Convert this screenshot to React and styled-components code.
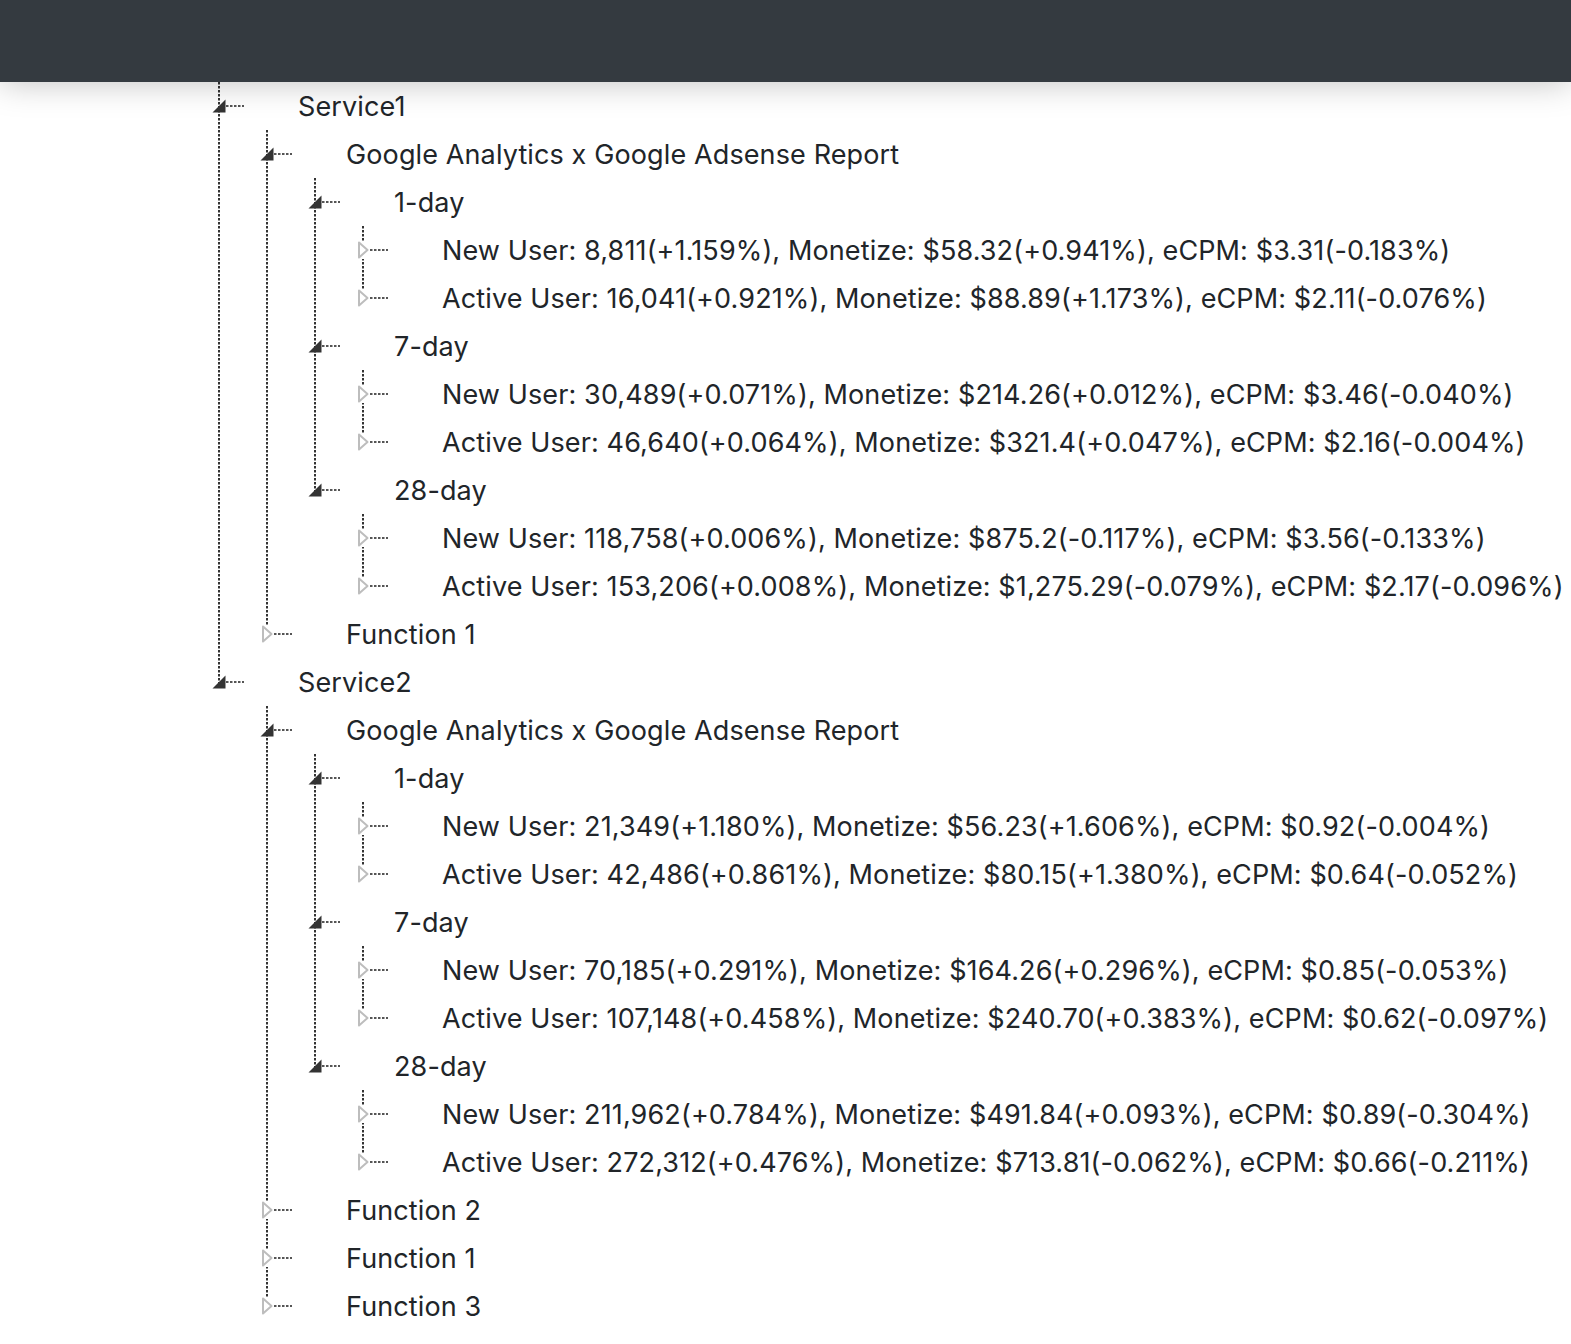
import React from 'react';
import styled, { createGlobalStyle } from 'styled-components';

const GlobalStyle = createGlobalStyle`
  html, body {
    margin: 0;
    padding: 0;
    background: #fff;
  }
  body {
    font-family: Inter, "Noto Sans", "Liberation Sans", sans-serif;
    color: #212529;
  }
`;

const Page = styled.div`
  width: 100%;
  min-height: 1344px;
  overflow: hidden;
`;

const TopBar = styled.header`
  position: relative;
  z-index: 2;
  height: 82px;
  background: #343a40;
  box-shadow: 0 0 34px rgba(0, 0, 0, 0.26);
`;

const Content = styled.main`
  padding-left: 218px;
`;

const Tree = styled.ul`
  list-style: none;
  margin: 0;
  padding: 0 0 0 ${p => (p.$root ? 0 : 48)}px;
`;

// dotted guide line, 4px period
const dots = 'linear-gradient(#333 2px, #9a9a9a 2px 3px, transparent 3px) 0 0 / 2px 4px repeat-y';

const Node = styled.li`
  margin: 0;
  background: ${dots};

  &:last-child {
    background: linear-gradient(#fff, #fff) 0 25px / 2px 100% no-repeat, ${dots};
  }
`;

const Row = styled.div`
  display: flex;
  align-items: center;
  height: 48px;
  margin-left: -6px;
`;

const Toggle = styled.span`
  display: flex;
  align-items: center;
  justify-content: ${p => (p.$open ? 'flex-start' : 'center')};
  width: 14px;
  height: 18px;
  background: ${p => (p.$open ? 'transparent' : '#fff')};
`;

const Connector = styled.span`
  width: 18px;
  height: 2px;
  background: linear-gradient(to right, #555 2px, #aaa 2px 3px, transparent 3px) 0 0 / 4px 2px repeat-x;
`;

const Label = styled.span`
  margin-left: 54px;
  padding-top: 2px;
  font-size: 27px;
  line-height: 46px;
  white-space: nowrap;
  letter-spacing: 0.12px;
`;

const OpenIcon = () => (
  <svg width="14" height="14" viewBox="0 0 14 14">
    <path d="M0.5 13.5 L13.5 0.5 L13.5 13.5 Z" fill="#333" />
  </svg>
);

const LeafIcon = () => (
  <svg width="12" height="18" viewBox="0 0 12 18">
    <path d="M2 1.5 L10.5 9 L2 16.5 Z" fill="#fff" stroke="#bdbdbd" strokeWidth="2" strokeLinejoin="round" />
  </svg>
);

const stats = (rows) => rows.map(t => ({ label: t }));

const data = [
  {
    label: 'Service1',
    children: [
      {
        label: 'Google Analytics x Google Adsense Report',
        children: [
          {
            label: '1-day',
            children: stats([
              'New User: 8,811(+1.159%), Monetize: $58.32(+0.941%), eCPM: $3.31(-0.183%)',
              'Active User: 16,041(+0.921%), Monetize: $88.89(+1.173%), eCPM: $2.11(-0.076%)',
            ]),
          },
          {
            label: '7-day',
            children: stats([
              'New User: 30,489(+0.071%), Monetize: $214.26(+0.012%), eCPM: $3.46(-0.040%)',
              'Active User: 46,640(+0.064%), Monetize: $321.4(+0.047%), eCPM: $2.16(-0.004%)',
            ]),
          },
          {
            label: '28-day',
            children: stats([
              'New User: 118,758(+0.006%), Monetize: $875.2(-0.117%), eCPM: $3.56(-0.133%)',
              'Active User: 153,206(+0.008%), Monetize: $1,275.29(-0.079%), eCPM: $2.17(-0.096%)',
            ]),
          },
        ],
      },
      { label: 'Function 1' },
    ],
  },
  {
    label: 'Service2',
    children: [
      {
        label: 'Google Analytics x Google Adsense Report',
        children: [
          {
            label: '1-day',
            children: stats([
              'New User: 21,349(+1.180%), Monetize: $56.23(+1.606%), eCPM: $0.92(-0.004%)',
              'Active User: 42,486(+0.861%), Monetize: $80.15(+1.380%), eCPM: $0.64(-0.052%)',
            ]),
          },
          {
            label: '7-day',
            children: stats([
              'New User: 70,185(+0.291%), Monetize: $164.26(+0.296%), eCPM: $0.85(-0.053%)',
              'Active User: 107,148(+0.458%), Monetize: $240.70(+0.383%), eCPM: $0.62(-0.097%)',
            ]),
          },
          {
            label: '28-day',
            children: stats([
              'New User: 211,962(+0.784%), Monetize: $491.84(+0.093%), eCPM: $0.89(-0.304%)',
              'Active User: 272,312(+0.476%), Monetize: $713.81(-0.062%), eCPM: $0.66(-0.211%)',
            ]),
          },
        ],
      },
      { label: 'Function 2' },
      { label: 'Function 1' },
      { label: 'Function 3' },
    ],
  },
];

const TreeNode = ({ node }) => {
  const open = !!node.children;
  return (
    <Node>
      <Row>
        <Toggle $open={open}>{open ? <OpenIcon /> : <LeafIcon />}</Toggle>
        <Connector />
        <Label>{node.label}</Label>
      </Row>
      {open && (
        <Tree>
          {node.children.map((c, i) => <TreeNode key={i} node={c} />)}
        </Tree>
      )}
    </Node>
  );
};

export default function App() {
  return (
    <Page>
      <GlobalStyle />
      <TopBar />
      <Content>
        <Tree $root>
          {data.map((n, i) => <TreeNode key={i} node={n} />)}
        </Tree>
      </Content>
    </Page>
  );
}
